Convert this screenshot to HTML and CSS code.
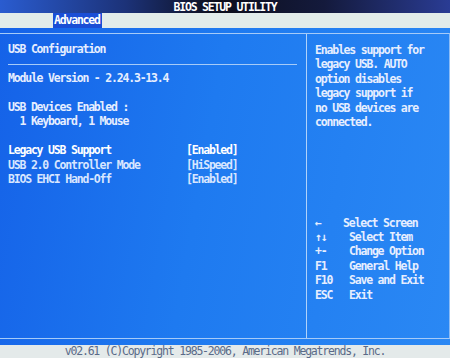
FILE: index.html
```html
<!DOCTYPE html>
<html lang="en">
<head>
    <meta charset="UTF-8">
    <title>BIOS Setup Utility</title>
    <link rel="stylesheet" href="styles.css">
</head>
<body>
    <div class="screen">
        <div class="title">BIOS SETUP UTILITY</div>
        <div class="menu">
            <span class="tab">Advanced</span>
        </div>

        <div class="frame">
            <div class="panels">
                <div class="main">
                    <div class="line">USB Configuration</div>
                    <hr class="sep">
                    <div class="line">Module Version - 2.24.3-13.4</div>
                    <div class="line"></div>
                    <div class="line">USB Devices Enabled :</div>
                    <div class="line">  1 Keyboard, 1 Mouse</div>
                    <div class="line"></div>
                    <div class="item selected"><span class="label">Legacy USB Support</span><span>[Enabled]</span></div>
                    <div class="item"><span class="label">USB 2.0 Controller Mode</span><span>[HiSpeed]</span></div>
                    <div class="item"><span class="label">BIOS EHCI Hand-Off</span><span>[Enabled]</span></div>
                </div>

                <div class="side">
                    <div class="help">
                        <div class="line">Enables support for</div>
                        <div class="line">legacy USB. AUTO</div>
                        <div class="line">option disables</div>
                        <div class="line">legacy support if</div>
                        <div class="line">no USB devices are</div>
                        <div class="line">connected.</div>
                    </div>

                    <div class="keys">
                        <div class="key first"><span class="k">←</span><span>Select Screen</span></div>
                        <div class="key"><span class="k">↑↓</span><span>Select Item</span></div>
                        <div class="key"><span class="k">+-</span><span>Change Option</span></div>
                        <div class="key"><span class="k">F1</span><span>General Help</span></div>
                        <div class="key"><span class="k">F10</span><span>Save and Exit</span></div>
                        <div class="key"><span class="k">ESC</span><span>Exit</span></div>
                    </div>
                </div>
            </div>
        </div>

        <div class="footer">v02.61 (C)Copyright 1985-2006, American Megatrends, Inc.</div>
    </div>
</body>
</html>
```

FILE: styles.css
```css
body {
    margin: 0;
    background: #1a6ae8;
}
.screen {
    width: 450px;
    height: 358px;
    font-family: "DejaVu Sans Mono", "Liberation Mono", monospace;
    font-size: 11.5px;
    font-weight: bold;
    letter-spacing: -1.2px;
    color: #e6eeff;
    display: flex;
    flex-direction: column;
    overflow: hidden;
}
.title {
    height: 13px;
    line-height: 14px;
    text-align: center;
    color: #ffffff;
    background: linear-gradient(90deg, #2a5cd0 0%, #1c3278 28%, #0c0e1c 48%, #141a3c 72%, #2a3c94 100%);
}
.menu {
    height: 15px;
    line-height: 15px;
    background: #e2ecea;
    padding-left: 53px;
}
.tab {
    display: inline-block;
    padding: 0 2px 0 1px;
    background: #1a4ed6;
    color: #ffffff;
}
.frame {
    flex: 1;
    padding: 5px 0 6px;
    background: linear-gradient(100deg, #1562e8 0%, #1e7af0 45%, #2a88f4 100%);
}
.panels {
    height: 100%;
    box-sizing: border-box;
    display: flex;
    border-top: 1px solid #a6cbf8;
    border-bottom: 1px solid #a6cbf8;
    border-right: 1px solid #8cbcf6;
}
.main {
    width: 307px;
    border-right: 1px solid #b0d2fa;
    padding: 8px 0 0 8px;
    box-sizing: border-box;
}
.line, .item {
    height: 14.5px;
    line-height: 14.5px;
    white-space: pre;
}
.sep {
    border: none;
    border-top: 1px solid #a6cbf8;
    margin: 7px 9px 6px 0;
}
.item {
    display: flex;
    color: #d8e6ff;
}
.item .label {
    width: 178px;
}
.item.selected {
    color: #ffffff;
}
.side {
    flex: 1;
    display: flex;
    flex-direction: column;
    justify-content: space-between;
    padding: 9px 0 36px 8px;
}
.help .line {
    height: 14.4px;
    line-height: 14.4px;
}
.key {
    display: flex;
    height: 14.4px;
    line-height: 14.4px;
    white-space: pre;
}
.key .k {
    width: 34px;
}
.key.first .k {
    width: 28px;
}
.footer {
    height: 13px;
    line-height: 13px;
    text-align: center;
    background: #e4eaea;
    color: #5a6a88;
    font-weight: normal;
}
```
